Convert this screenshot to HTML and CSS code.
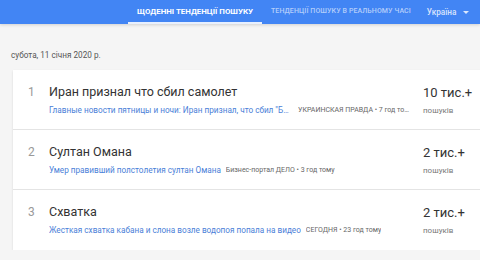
FILE: index.html
```html
<!DOCTYPE html>
<html lang="uk">
<head>
    <meta charset="UTF-8">
    <title>Google Trends</title>
    <link rel="stylesheet" href="styles.css">
</head>
<body>
    <header class="topbar">
        <nav class="tabs">
            <a class="tab active">Щоденні тенденції пошуку</a>
            <a class="tab">Тенденції пошуку в реальному часі</a>
        </nav>
        <div class="geo">Україна <span class="caret"></span></div>
    </header>

    <main class="content">
        <div class="date">субота, 11 січня 2020 р.</div>

        <div class="card">
            <div class="row">
                <div class="rank">1</div>
                <div class="details">
                    <div class="title">Иран признал что сбил самолет</div>
                    <div class="sub">
                        <span class="link">Главные новости пятницы и ночи: Иран признал, что сбил "Боинг"</span>
                        <span class="source">УКРАИНСКАЯ ПРАВДА • 7 год тому</span>
                    </div>
                </div>
                <div class="metric">
                    <div class="count">10 тис.+</div>
                    <div class="label">пошуків</div>
                </div>
            </div>

            <div class="row">
                <div class="rank">2</div>
                <div class="details">
                    <div class="title">Султан Омана</div>
                    <div class="sub">
                        <span class="link full">Умер правивший полстолетия султан Омана</span>
                        <span class="source">Бизнес-портал ДЕЛО • 3 год тому</span>
                    </div>
                </div>
                <div class="metric">
                    <div class="count">2 тис.+</div>
                    <div class="label">пошуків</div>
                </div>
            </div>

            <div class="row">
                <div class="rank">3</div>
                <div class="details">
                    <div class="title">Схватка</div>
                    <div class="sub">
                        <span class="link full">Жесткая схватка кабана и слона возле водопоя попала на видео</span>
                        <span class="source">СЕГОДНЯ • 23 год тому</span>
                    </div>
                </div>
                <div class="metric">
                    <div class="count">2 тис.+</div>
                    <div class="label">пошуків</div>
                </div>
            </div>
        </div>
    </main>
</body>
</html>
```

FILE: styles.css
```css
* {
    margin: 0;
    padding: 0;
    box-sizing: border-box;
}

body {
    font-family: Roboto, "Liberation Sans", sans-serif;
    background-color: #f5f5f5;
    color: #333;
    width: 480px;
    overflow: hidden;
}

.topbar {
    height: 24px;
    background-color: #4285f4;
    display: flex;
    align-items: stretch;
    padding-left: 128px;
    white-space: nowrap;
    box-shadow: 0 1px 3px rgba(0, 0, 0, 0.15);
}

.tabs {
    display: flex;
}

.tab {
    display: flex;
    align-items: center;
    padding: 0 9px;
    font-size: 7px;
    font-weight: 500;
    text-transform: uppercase;
    letter-spacing: 0.1px;
    color: rgba(255, 255, 255, 0.6);
    border-bottom: 2px solid transparent;
}

.tab.active {
    color: #fff;
    font-weight: 700;
    font-size: 7.9px;
    letter-spacing: 0;
    border-bottom-color: #e8f0fe;
}

.geo {
    margin-left: 7px;
    display: flex;
    align-items: center;
    gap: 7px;
    font-size: 8.2px;
    font-weight: 500;
    color: rgba(255, 255, 255, 0.8);
}

.caret {
    width: 0;
    height: 0;
    border-left: 3px solid transparent;
    border-right: 3px solid transparent;
    border-top: 3px solid rgba(255, 255, 255, 0.8);
}

.content {
    padding: 26px 0 0 11px;
}

.date {
    font-size: 8.2px;
    color: #555;
    margin-bottom: 10px;
}

.card {
    margin-left: 2px;
    width: 480px;
    background-color: #fff;
    box-shadow: 0 1px 2px rgba(0, 0, 0, 0.12);
}

.row {
    height: 60px;
    display: flex;
    align-items: center;
    border-bottom: 1px solid #e4e4e4;
    white-space: nowrap;
}

.row:last-child {
    border-bottom: none;
}

.rank {
    flex: none;
    width: 36px;
    padding-left: 15px;
    font-size: 12px;
    color: #999;
    align-self: flex-start;
    margin-top: 15px;
}

.details {
    flex: none;
    width: 374px;
}

.title {
    font-size: 12.5px;
    color: #333;
    margin-bottom: 6px;
}

.sub {
    display: flex;
    gap: 5px;
    font-size: 8.2px;
}

.link {
    color: #4a80d8;
    max-width: 244px;
    overflow: hidden;
    text-overflow: ellipsis;
}

.link.full {
    max-width: none;
}

.source {
    color: #666;
    font-size: 7px;
    line-height: 11px;
    overflow: hidden;
    text-overflow: ellipsis;
    max-width: 114px;
}

.metric {
    flex: none;
}

.count {
    font-size: 13px;
    color: #333;
    margin-bottom: 6px;
}

.label {
    font-size: 8px;
    color: #777;
}
```
